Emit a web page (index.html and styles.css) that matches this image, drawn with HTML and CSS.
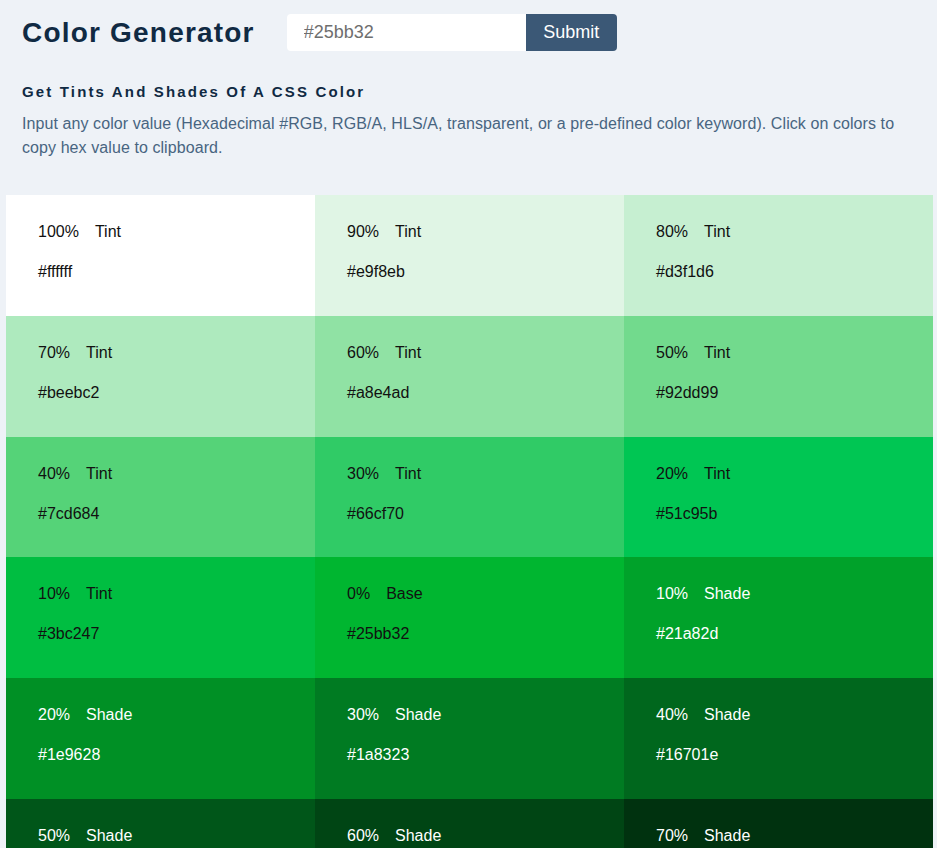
FILE: index.html
```html
<!DOCTYPE html>
<html lang="en">
<head>
<meta charset="utf-8">
<title>Color Generator</title>
<link rel="stylesheet" href="styles.css">
</head>
<body>
<header class="top">
  <h1 class="title">Color Generator</h1>
  <form class="picker">
    <input class="picker-input" type="text" value="#25bb32">
    <button class="picker-btn" type="button">Submit</button>
  </form>
</header>
<section class="intro">
  <h2 class="subtitle">Get Tints And Shades Of A CSS Color</h2>
  <p class="desc">Input any color value (Hexadecimal #RGB, RGB/A, HLS/A, transparent, or a pre-defined color keyword). Click on colors to copy hex value to clipboard.</p>
</section>
<main class="grid">
  <div class="cell c100"><p class="row"><span class="pct">100%</span><span>Tint</span></p><p class="hex">#ffffff</p></div>
  <div class="cell c90"><p class="row"><span class="pct">90%</span><span>Tint</span></p><p class="hex">#e9f8eb</p></div>
  <div class="cell c80"><p class="row"><span class="pct">80%</span><span>Tint</span></p><p class="hex">#d3f1d6</p></div>
  <div class="cell c70"><p class="row"><span class="pct">70%</span><span>Tint</span></p><p class="hex">#beebc2</p></div>
  <div class="cell c60"><p class="row"><span class="pct">60%</span><span>Tint</span></p><p class="hex">#a8e4ad</p></div>
  <div class="cell c50"><p class="row"><span class="pct">50%</span><span>Tint</span></p><p class="hex">#92dd99</p></div>
  <div class="cell c40"><p class="row"><span class="pct">40%</span><span>Tint</span></p><p class="hex">#7cd684</p></div>
  <div class="cell c30"><p class="row"><span class="pct">30%</span><span>Tint</span></p><p class="hex">#66cf70</p></div>
  <div class="cell c20"><p class="row"><span class="pct">20%</span><span>Tint</span></p><p class="hex">#51c95b</p></div>
  <div class="cell c10"><p class="row"><span class="pct">10%</span><span>Tint</span></p><p class="hex">#3bc247</p></div>
  <div class="cell base"><p class="row"><span class="pct">0%</span><span>Base</span></p><p class="hex">#25bb32</p></div>
  <div class="cell s10 dark"><p class="row"><span class="pct">10%</span><span>Shade</span></p><p class="hex">#21a82d</p></div>
  <div class="cell s20 dark"><p class="row"><span class="pct">20%</span><span>Shade</span></p><p class="hex">#1e9628</p></div>
  <div class="cell s30 dark"><p class="row"><span class="pct">30%</span><span>Shade</span></p><p class="hex">#1a8323</p></div>
  <div class="cell s40 dark"><p class="row"><span class="pct">40%</span><span>Shade</span></p><p class="hex">#16701e</p></div>
  <div class="cell s50 dark"><p class="row"><span class="pct">50%</span><span>Shade</span></p><p class="hex">#135e19</p></div>
  <div class="cell s60 dark"><p class="row"><span class="pct">60%</span><span>Shade</span></p><p class="hex">#0f4b14</p></div>
  <div class="cell s70 dark"><p class="row"><span class="pct">70%</span><span>Shade</span></p><p class="hex">#0b380f</p></div>
</main>
</body>
</html>
```
FILE: styles.css
```css
* { box-sizing: border-box; }
html, body {
  margin: 0;
  background: #eef2f7;
  font-family: "Liberation Sans", Arial, sans-serif;
  color: #102a43;
}
.top {
  display: flex;
  align-items: center;
  padding: 14px 22px 0;
}
.title {
  margin: 0 32px 0 0;
  font-size: 28px;
  font-weight: 700;
  letter-spacing: 1.2px;
  color: #102a43;
  line-height: 37px;
}
.picker {
  display: flex;
  margin: 0;
}
.picker-input {
  width: 239px;
  height: 37px;
  border: none;
  border-radius: 4px 0 0 4px;
  padding: 0 17px;
  font-family: "Liberation Sans", Arial, sans-serif;
  font-size: 18px;
  color: #6e6e6e;
  background: #fff;
  outline: none;
}
.picker-btn {
  width: 91px;
  height: 37px;
  border: none;
  border-radius: 0 4px 4px 0;
  background: #3b5876;
  color: #fff;
  font-family: "Liberation Sans", Arial, sans-serif;
  font-size: 18px;
  padding: 0;
}
.intro {
  padding: 0 22px;
}
.subtitle {
  margin: 32px 0 0;
  font-size: 15px;
  font-weight: 700;
  letter-spacing: 2.15px;
  line-height: 17px;
  color: #102a43;
}
.desc {
  margin: 12px 0 0;
  font-size: 16px;
  line-height: 24px;
  letter-spacing: 0.08px;
  color: #486581;
}
.grid {
  display: grid;
  grid-template-columns: repeat(3, 1fr);
  grid-auto-rows: 120.8px;
  width: 927px;
  margin: 35px 0 0 6px;
}
.cell {
  padding: 25px 32px 0;
  font-size: 16px;
  line-height: 24px;
  color: #111;
}
.cell p { margin: 0; }
.cell .hex { margin-top: 16px; }
.pct { margin-right: 16px; }
.dark { color: #fff; }
.c100 { background: #ffffff; }
.c90 { background: #e0f5e5; }
.c80 { background: #c6efd1; }
.c70 { background: #aeeabe; }
.c60 { background: #90e2a4; }
.c50 { background: #72da8d; }
.c40 { background: #55d378; }
.c30 { background: #30cb66; }
.c20 { background: #00c653; }
.c10 { background: #00be41; }
.base { background: #00b630; }
.s10 { background: #00a22a; }
.s20 { background: #009025; }
.s30 { background: #007b22; }
.s40 { background: #00671d; }
.s50 { background: #005619; }
.s60 { background: #004514; }
.s70 { background: #00320f; }
```
